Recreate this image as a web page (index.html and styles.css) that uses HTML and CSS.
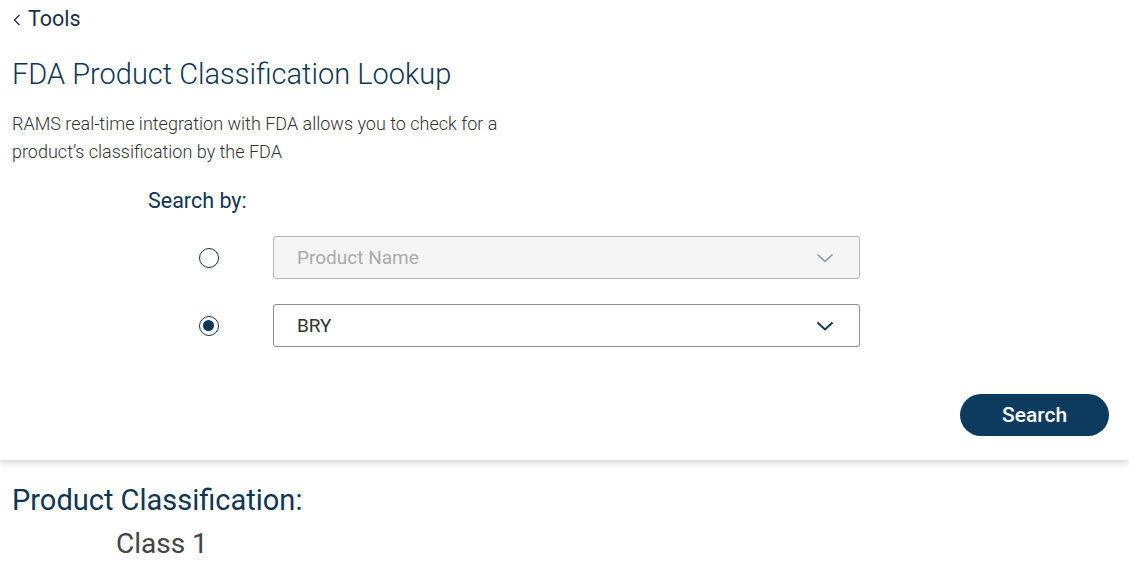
FILE: index.html
```html
<!DOCTYPE html>
<html lang="en">
<head>
<meta charset="utf-8">
<title>FDA Product Classification Lookup</title>
<link rel="stylesheet" href="styles.css">
</head>
<body>
<section class="lookup">
  <a class="back" href="#"><svg class="back-arrow" width="8" height="12" viewBox="0 0 8 12"><path d="M6.5 1 L1.5 6 L6.5 11" fill="none" stroke="currentColor" stroke-width="1.4"/></svg>Tools</a>
  <h1 class="title">FDA Product Classification Lookup</h1>
  <p class="intro">RAMS real-time integration with FDA allows you to check for a<br>product’s classification by the FDA</p>

  <div class="search-by">
    <div class="search-label">Search by:</div>
    <div class="option">
      <span class="radio"></span>
      <div class="select disabled">
        <span class="select-text">Product Name</span>
        <svg class="chev" width="18" height="10" viewBox="0 0 18 10"><path d="M1.5 1.5 L9 8.5 L16.5 1.5" fill="none" stroke="currentColor" stroke-width="1.6"/></svg>
      </div>
    </div>
    <div class="option">
      <span class="radio checked"></span>
      <div class="select">
        <span class="select-text">BRY</span>
        <svg class="chev" width="18" height="10" viewBox="0 0 18 10"><path d="M1.5 1.5 L9 8.5 L16.5 1.5" fill="none" stroke="currentColor" stroke-width="2"/></svg>
      </div>
    </div>
  </div>

  <div class="actions">
    <button class="btn-search">Search</button>
  </div>
</section>

<section class="result">
  <h2 class="result-title">Product Classification:</h2>
  <div class="result-value">Class 1</div>
</section>
</body>
</html>
```
FILE: styles.css
```css
* { box-sizing: border-box; }

html, body {
  margin: 0;
  padding: 0;
  background: #fff;
  font-family: Roboto, "Liberation Sans", sans-serif;
  color: #0f3556;
}

.lookup {
  padding: 5px 20px 24px 12px;
  height: 460px;
  box-shadow: 0 3px 7px rgba(0, 0, 0, 0.16);
  background: #fff;
}

.back {
  display: inline-flex;
  align-items: center;
  gap: 7px;
  font-size: 21.5px;
  line-height: 28px;
  color: #1c3047;
  text-decoration: none;
}
.back-arrow { margin-left: 1px; margin-top: 1px; }

.title {
  margin: 23px 0 0;
  font-size: 29px;
  font-weight: 300;
  line-height: 36px;
  color: #0f3556;
}

.intro {
  margin: 18px 0 0;
  font-size: 18px;
  font-weight: 300;
  line-height: 28px;
  color: #333;
}

.search-by {
  margin-left: 136px;
  margin-top: 21px;
}

.search-label {
  font-size: 21.5px;
  line-height: 28px;
  color: #0f3556;
}

.option {
  display: flex;
  align-items: center;
  margin-top: 21px;
}
.option + .option { margin-top: 25px; }

.radio {
  width: 20px;
  height: 20px;
  margin-left: 51px;
  border: 1.5px solid #0f3556;
  border-radius: 50%;
  flex: none;
  position: relative;
}
.radio.checked::after {
  content: "";
  position: absolute;
  left: 3px;
  top: 3px;
  width: 11px;
  height: 11px;
  border-radius: 50%;
  background: #0f3556;
}

.select {
  margin-left: 54px;
  width: 587px;
  height: 43px;
  border: 1px solid #8f8f8f;
  border-radius: 3px;
  display: flex;
  align-items: center;
  justify-content: space-between;
  padding: 0 25px 0 23px;
  background: #fff;
  color: #333;
}
.select.disabled {
  background: #f5f5f5;
  border-color: #b4b4b4;
  color: #aaa;
}
.select-text {
  font-size: 19px;
}
.chev { color: #0f3556; }
.select.disabled .chev { color: #8a99a6; }

.actions {
  display: flex;
  justify-content: flex-end;
  margin-top: 47px;
}

.btn-search {
  width: 149px;
  height: 42px;
  border: none;
  border-radius: 21px;
  background: #0d3a5f;
  color: #fff;
  font-family: Roboto, "Liberation Sans", sans-serif;
  font-size: 21px;
  font-weight: 500;
  cursor: pointer;
}

.result {
  padding: 22px 12px 0;
}

.result-title {
  margin: 0;
  font-size: 29px;
  font-weight: 400;
  line-height: 36px;
  color: #0f3556;
}

.result-value {
  margin: 8px 0 0 104px;
  font-size: 28px;
  line-height: 36px;
  color: #444;
}
```
